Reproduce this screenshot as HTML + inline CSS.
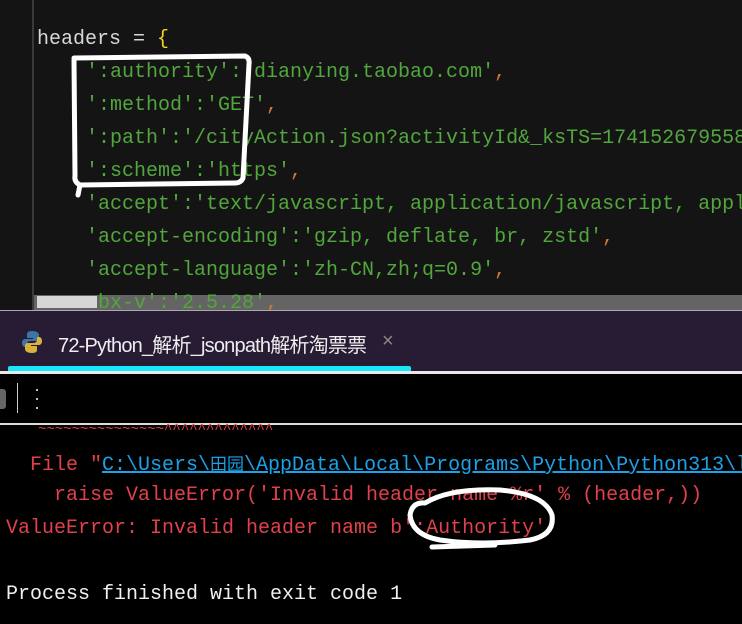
<!DOCTYPE html><html><head><style>
body{margin:0;width:742px;height:624px;overflow:hidden;background:#000;font-family:"Liberation Mono",monospace;position:relative}
.ed{position:absolute;left:0;top:0;width:742px;height:311px;background:#141414}
.gut{position:absolute;left:32px;top:0;width:2px;height:311px;background:#3a3a3a}
.l{position:absolute;font-size:20px;white-space:pre;line-height:24px}
.g{color:#52a63e}.w{color:#d8d8d8}.r{color:#e0414b}.o{color:#d2743a}
.tab{position:absolute;left:0;top:311px;width:742px;height:61px;background:#281c35}
</style></head><body>
<div class="ed"></div><div class="gut"></div>
<div class="l w" style="left:37px;top:28px">headers = <span style="color:#f5d31c">{</span></div>
<div class="l g" style="left:86px;top:61px">':authority':'dianying.taobao.com'<span class="o">,</span></div>
<div class="l g" style="left:86px;top:94px">':method':'GET'<span class="o">,</span></div>
<div class="l g" style="left:86px;top:127px">':path':'/cityAction.json?activityId&amp;_ksTS=1741526795580</div>
<div class="l g" style="left:86px;top:160px">':scheme':'https'<span class="o">,</span></div>
<div class="l g" style="left:86px;top:193px">'accept':'text/javascript, application/javascript, appl</div>
<div class="l g" style="left:86px;top:226px">'accept-encoding':'gzip, deflate, br, zstd'<span class="o">,</span></div>
<div class="l g" style="left:86px;top:259px">'accept-language':'zh-CN,zh;q=0.9'<span class="o">,</span></div>
<div style="position:absolute;left:34px;top:295px;width:708px;height:15px;background:#646464"></div>
<div style="position:absolute;left:37px;top:296px;width:60px;height:12px;background:#d6d6d6"></div>
<div class="l g" style="left:98px;top:292px;height:18px;overflow:hidden">bx-v':'2.5.28'<span class="o">,</span></div>
<div style="position:absolute;left:0;top:310px;width:742px;height:1px;background:#aaa"></div>
<div class="tab"></div>
<svg style="position:absolute;left:22px;top:330px" width="20" height="24" viewBox="0 0 20 24"><path d="M10 1C5 1 5 3 5 5v3h6v1H3C1 9 0 11 0 13s1 4 3 4h2v-3c0-2 2-3 4-3h5c2 0 3-1 3-3V5c0-2-2-4-7-4z" fill="#3c74a8"/><path d="M10 23c5 0 5-2 5-4v-3H9v-1h8c2 0 3-2 3-4s-1-4-3-4h-2v3c0 2-2 3-4 3H6c-2 0-3 1-3 3v3c0 2 2 4 7 4z" fill="#d9b13c"/></svg>
<div style="position:absolute;left:58px;top:329px;color:#eee;font:20px 'Liberation Sans','Noto Sans CJK SC',sans-serif;letter-spacing:-0.8px">72-Python_解析_jsonpath解析淘票票</div>
<div style="position:absolute;left:382px;top:330px;color:#888;font:20px 'Liberation Sans',sans-serif">×</div>
<div style="position:absolute;left:8px;top:366px;width:403px;height:6px;background:#19e6fa;border-radius:2px"></div>
<div style="position:absolute;left:0;top:371px;width:742px;height:3px;background:#e8e8e8"></div>
<div style="position:absolute;left:0;top:389px;width:6px;height:20px;background:#666;border-radius:0 3px 3px 0"></div>
<div style="position:absolute;left:17px;top:383px;width:1px;height:30px;background:#ccc"></div>
<div style="position:absolute;left:34px;top:385px;color:#ddd;font:18px 'Liberation Sans',sans-serif;line-height:9px">·<br>·<br>·</div>
<div style="position:absolute;left:0;top:423px;width:742px;height:2px;background:#ddd"></div>
<div class="l r" style="left:38px;top:418px;font-size:14px;height:12px;overflow:hidden">~~~~~~~~~~~~~~~^^^^^^^^^^^^^</div>
<div class="l r" style="left:30px;top:451px">File "<span style="color:#1ba1e8;text-decoration:underline">C:\Users\<span style="font-family:'Noto Sans CJK SC',sans-serif;font-size:17px">田园</span>\AppData\Local\Programs\Python\Python313\l</span></div>
<div class="l r" style="left:54px;top:484px">raise ValueError('Invalid header name %r' % (header,))</div>
<div class="l r" style="left:6px;top:517px">ValueError: Invalid header name b':Authority'</div>
<div class="l" style="left:6px;top:583px;color:#f0f0f0">Process finished with exit code 1</div>
<svg style="position:absolute;left:0;top:0" width="742" height="624"><g fill="none" stroke="#fff" stroke-width="5" stroke-linecap="round"><path d="M74 58L245 56Q250 58 249 64L243 178Q241 183 235 183L80 185Q74 182 75 176L74 60M80 185L78 195"/><path d="M425 503Q450 488 500 490Q545 494 552 515Q555 535 530 540Q480 546 440 540Q412 535 410 515Q412 502 425 503M432 547L495 545"/></g></svg>
</body></html>
